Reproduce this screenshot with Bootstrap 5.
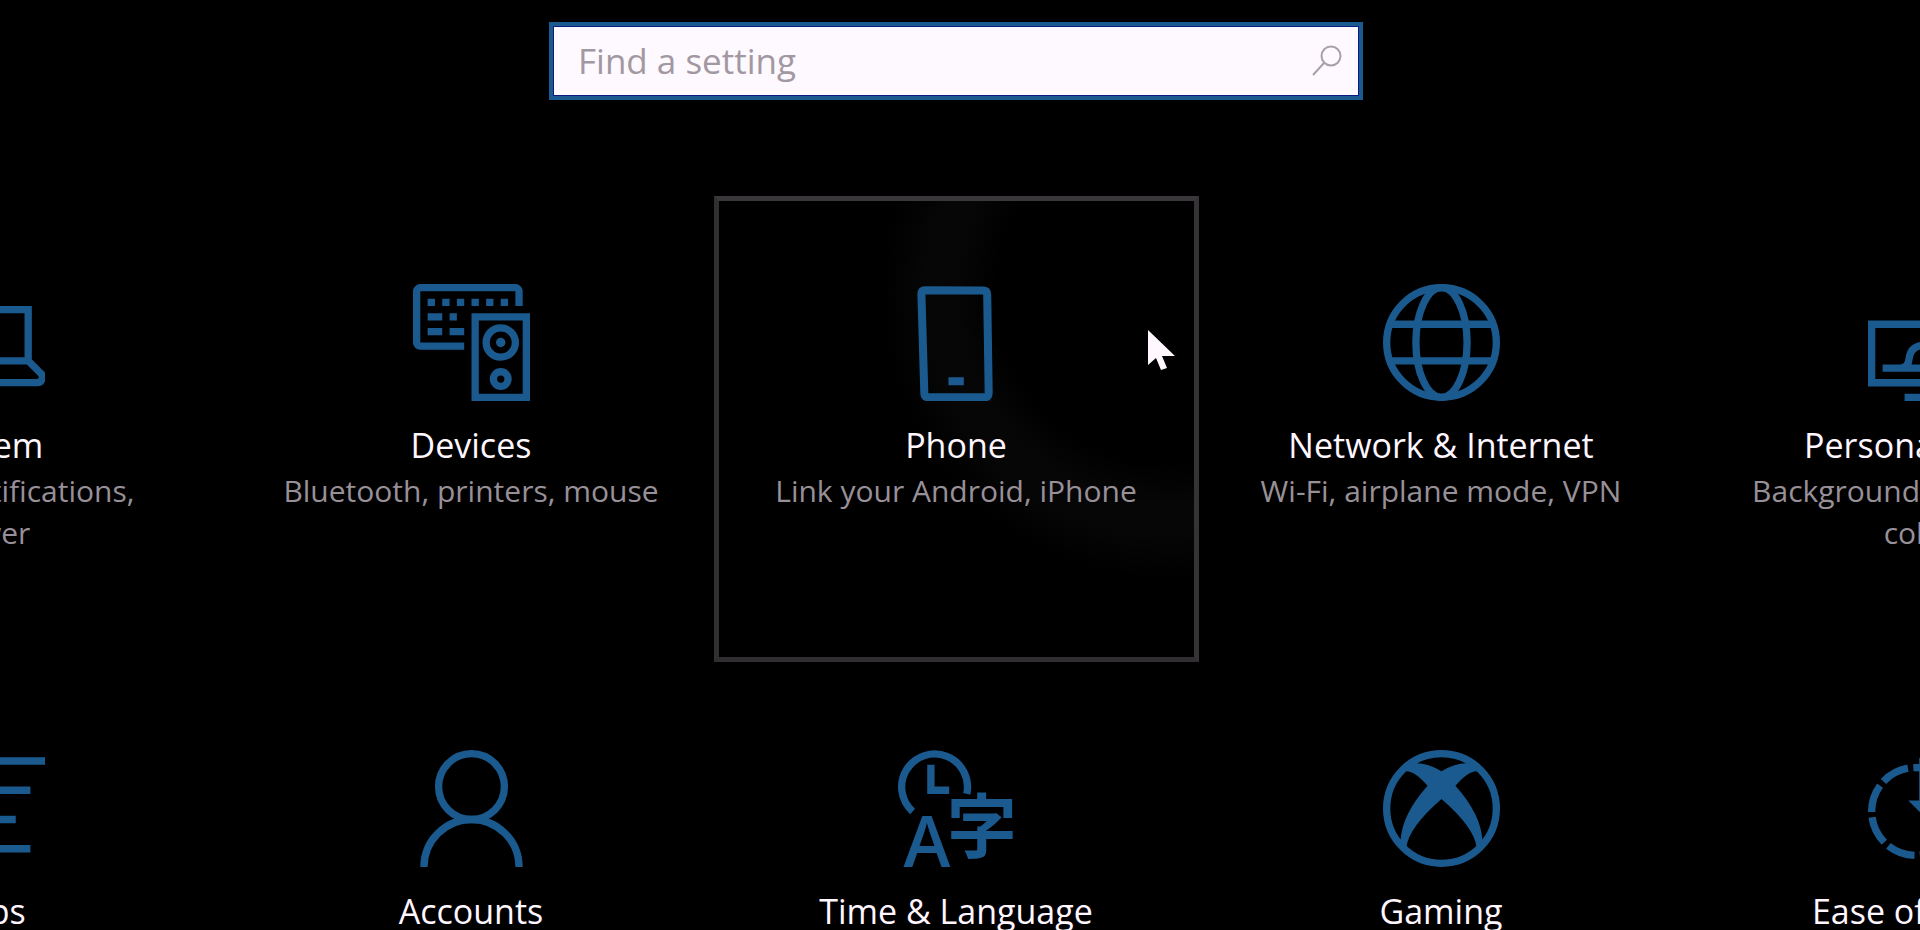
<!DOCTYPE html>
<html lang="en">
<head>
<meta charset="utf-8">
<meta name="viewport" content="width=device-width, initial-scale=1">
<title>Settings</title>
<link href="https://cdn.jsdelivr.net/npm/bootstrap@5.3.0/dist/css/bootstrap.min.css" rel="stylesheet">
<style>
  :root { --accent: #1b5a8e; --ink: #fff6ff; --muted-ink: #989098; }
  body { background: #000; color: var(--ink); font-family: "Open Sans", "Noto Sans", sans-serif; }
  .settings-home { padding: 22px 8px 0 0; }
  .search-box { width: 814px; max-width: 100%; margin-bottom: 96px; }
  .search-box .form-control {
    height: 78px; padding: 0 80px 2px 25px; border: 4px solid var(--accent); border-radius: 0;
    background: #fef8ff; color: #333; font-size: 35px; box-shadow: inset 0 0 0 1px #0b1a80;
  }
  .search-box .form-control::placeholder { color: #a298a2; opacity: 1; }
  .search-go { top: 22px; right: 18px; width: 34px; height: 34px; color: #a99fa9; }
  .tile { width: 485px; height: 466px; padding: 83px 48px 0; border: 5px solid transparent; color: var(--ink); }
  .tile:hover { color: var(--ink); }
  .tile-active {
    border-color: #3b383b #363336 #302e31 #312f32;
    background: radial-gradient(circle at 450px 90px, transparent 170px, #060606 215px, #060606 240px, transparent 290px) padding-box;
  }
  .tile-icon { width: 117px; height: 117px; fill: none; stroke: var(--accent); stroke-width: 1; }
  .tile-icon .solid { fill: var(--accent); stroke: none; }
  .tile-title { margin-top: 19px; font-size: 34px; font-weight: 500; line-height: 50px; white-space: nowrap; }
  .tile-text { font-size: 30px; line-height: 42px; color: var(--muted-ink); }
  .pointer { left: 428px; top: 129px; width: 30px; height: 42px; }
</style>
</head>
<body class="vh-100 overflow-hidden">
<main class="settings-home">
  <form class="search-box position-relative mx-auto" role="search">
    <input id="find" class="form-control" type="text" placeholder="Find a setting" aria-label="Find a setting">
    <button class="search-go btn p-0 border-0 position-absolute d-flex" type="button" aria-label="Search">
      <svg width="34" height="34" viewBox="0 0 34 34" fill="none" stroke="currentColor" stroke-width="2"><circle cx="20" cy="12" r="9.5"/><path d="M13 19 2 31"/></svg>
    </button>
  </form>

  <nav aria-label="Settings categories">
    <div class="row g-0 flex-nowrap justify-content-center">
      <div class="col-auto"><a href="#" class="tile d-flex flex-column align-items-center text-center text-decoration-none">
        <svg class="tile-icon flex-shrink-0" viewBox="0 0 16 16"><path d="M2.500 3.500h11.200v7H2.500zM13.700 10.500l1.700 1.700a.75.75 0 0 1-.5 1.300H1.300a.75.75 0 0 1-.5-1.300l1.700-1.700"/></svg>
        <span class="tile-title">System</span>
        <span class="tile-text">Display, notifications, power</span>
      </a></div>
      <div class="col-auto"><a href="#" class="tile d-flex flex-column align-items-center text-center text-decoration-none">
        <svg class="tile-icon flex-shrink-0" viewBox="0 0 16 16"><path d="M14.5 3V1a.5.5 0 0 0-.5-.5H1A.5.5 0 0 0 .5 1v7a.5.5 0 0 0 .5.5h6M8.5 4.5h7v11h-7z"/><path d="M2 2.5h1m1 0h1m1 0h1m1 0h1m1 0h1m1 0h1M2 4.5h2m1 0h1M2 6.5h2m1 0h2"/><circle cx="12" cy="8" r="2"/><circle cx="12" cy="13" r="1"/><circle class="solid" cx="12" cy="8" r=".65"/></svg>
        <span class="tile-title">Devices</span>
        <span class="tile-text">Bluetooth, printers, mouse</span>
      </a></div>
      <div class="col-auto"><a href="#" class="tile tile-active position-relative d-flex flex-column align-items-center text-center text-decoration-none">
        <svg class="tile-icon flex-shrink-0" viewBox="0 0 16 16"><path d="M3.700.85 11.600.9q.6 0 .6.6l.2 13.300q0 .7-.6.7H4.200q-.6 0-.6-.6L3.200 1.400q0-.55.5-.55zM6.900 13.300h2.100" stroke-width="1.1"/></svg>
        <span class="tile-title">Phone</span>
        <span class="tile-text">Link your Android, iPhone</span>
        <svg class="pointer position-absolute" viewBox="0 0 30 42" fill="#fff8ff" aria-hidden="true"><path d="M1 0v35l8-7 5 12 6-2-5-12h13z"/></svg>
      </a></div>
      <div class="col-auto"><a href="#" class="tile d-flex flex-column align-items-center text-center text-decoration-none">
        <svg class="tile-icon flex-shrink-0" viewBox="0 0 16 16"><circle cx="8" cy="8" r="7.5"/><ellipse cx="8" cy="8" rx="3.5" ry="7.5"/><path d="M1 5.5h14M1 10.5h14"/></svg>
        <span class="tile-title">Network &amp; Internet</span>
        <span class="tile-text">Wi-Fi, airplane mode, VPN</span>
      </a></div>
      <div class="col-auto"><a href="#" class="tile d-flex flex-column align-items-center text-center text-decoration-none">
        <svg class="tile-icon flex-shrink-0" viewBox="0 0 16 16"><path d="M.5 5.5h15v8H.5zM8 13.5v2M5 15.5h6M2 11.5h6M4.400 11.500q1.100 0 1.200-1.200.2-1.700 1.700-1.900L12 4"/></svg>
        <span class="tile-title">Personalization</span>
        <span class="tile-text">Background, lock screen, colors</span>
      </a></div>
    </div>

    <div class="row g-0 flex-nowrap justify-content-center">
      <div class="col-auto"><a href="#" class="tile d-flex flex-column align-items-center text-center text-decoration-none">
        <svg class="tile-icon flex-shrink-0" viewBox="0 0 16 16"><path d="M0 1.5h2m2 0h12M0 5.5h2m2 0h10M0 9.5h2m2 0h8M0 13.5h2m2 0h10"/></svg>
        <span class="tile-title">Apps</span>
      </a></div>
      <div class="col-auto"><a href="#" class="tile d-flex flex-column align-items-center text-center text-decoration-none">
        <svg class="tile-icon flex-shrink-0" viewBox="0 0 16 16"><circle cx="8" cy="5" r="4.5"/><path d="M1.5 16a6.5 6.5 0 0 1 13 0"/></svg>
        <span class="tile-title">Accounts</span>
      </a></div>
      <div class="col-auto"><a href="#" class="tile d-flex flex-column align-items-center text-center text-decoration-none">
        <svg class="tile-icon flex-shrink-0" viewBox="0 0 16 16"><path d="M9.4 6A4.5 4.5 0 1 0 2 8.4M4.5 2v3.5H7"/><text class="solid" x="3.95" y="16" text-anchor="middle" font-size="9.7" font-weight="600">A</text><text class="solid" x="11.45" y="14.1" text-anchor="middle" font-family="Noto Sans CJK JP, sans-serif" font-size="9.6" font-weight="700">字</text></svg>
        <span class="tile-title">Time &amp; Language</span>
      </a></div>
      <div class="col-auto"><a href="#" class="tile d-flex flex-column align-items-center text-center text-decoration-none">
        <svg class="tile-icon flex-shrink-0" viewBox="0 0 16 16"><circle cx="8" cy="8" r="7.5"/><path class="solid" d="M2.500 2.400Q4.800 1 8 2.900q3.200-1.900 5.500-.5l-.7.5Q11.600 2.900 9.900 4.900q3.500 3.900 3.700 7.500l-.8.900Q12.500 10.600 8 6.700 3.500 10.600 3.200 13.300L2.400 12.400q.2-3.600 3.700-7.500Q4.400 2.900 3.200 2.900z"/></svg>
        <span class="tile-title">Gaming</span>
      </a></div>
      <div class="col-auto"><a href="#" class="tile d-flex flex-column align-items-center text-center text-decoration-none">
        <svg class="tile-icon flex-shrink-0" viewBox="0 0 16 16"><circle cx="6.5" cy="8.4" r="6" pathLength="80" stroke-dasharray="8.4 1.6" stroke-dashoffset="-.8"/><path class="solid" d="M7 1.100h2v5.800h1.500L8 9.400 5.500 6.900H7z"/></svg>
        <span class="tile-title">Ease of Access</span>
      </a></div>
    </div>
  </nav>
</main>
<script src="https://cdn.jsdelivr.net/npm/bootstrap@5.3.0/dist/js/bootstrap.bundle.min.js"></script>
</body>
</html>
